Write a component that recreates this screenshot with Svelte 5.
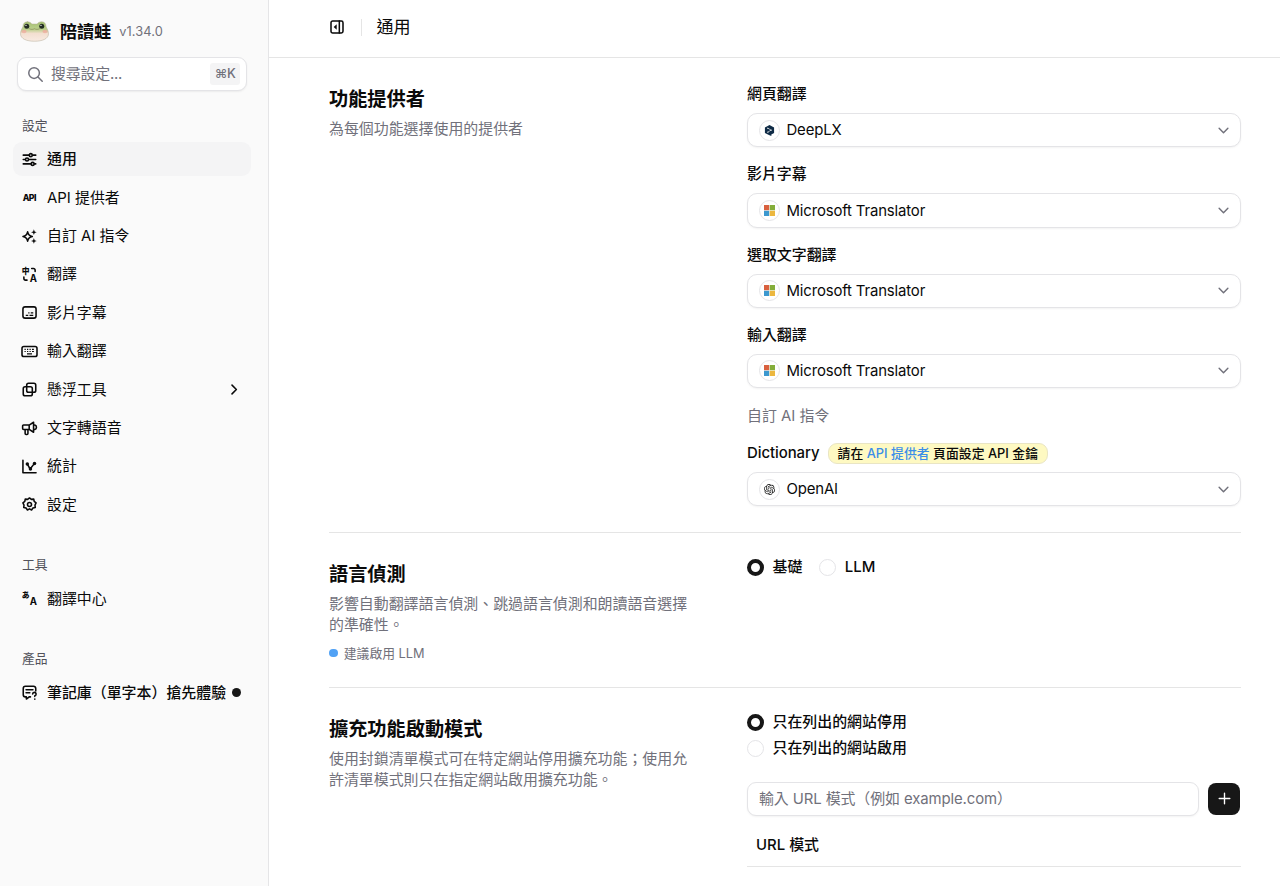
<script lang="ts">
  interface NavItem {
    label: string;
    icon: string;
    expandable?: boolean;
    badge?: boolean;
  }

  interface NavGroup {
    title: string;
    items: NavItem[];
  }

  const groups: NavGroup[] = [
    {
      title: "設定",
      items: [
        { label: "通用", icon: "sliders" },
        { label: "API 提供者", icon: "api" },
        { label: "自訂 AI 指令", icon: "sparkles" },
        { label: "翻譯", icon: "translate" },
        { label: "影片字幕", icon: "subtitles" },
        { label: "輸入翻譯", icon: "keyboard" },
        { label: "懸浮工具", icon: "float", expandable: true },
        { label: "文字轉語音", icon: "speech" },
        { label: "統計", icon: "chart" },
        { label: "設定", icon: "gear" },
      ],
    },
    { title: "工具", items: [{ label: "翻譯中心", icon: "hub" }] },
    { title: "產品", items: [{ label: "筆記庫（單字本）搶先體驗", icon: "notes", badge: true }] },
  ];

  const features = [
    { label: "網頁翻譯", provider: "DeepLX" },
    { label: "影片字幕", provider: "Microsoft Translator" },
    { label: "選取文字翻譯", provider: "Microsoft Translator" },
    { label: "輸入翻譯", provider: "Microsoft Translator" },
  ];

  let active = $state("sliders");
  let detection = $state("basic");
  let siteMode = $state("blacklist");
  let pattern = $state("");
</script>

{#snippet navIcon(name: string)}
  <svg class="nav-icon" viewBox="0 0 24 24">
    {#if name === "sliders"}
      <path d="M2 5h9M17 5h5M2 12h3M11 12h11M2 19h12M20 19h2" />
      <circle cx="14" cy="5" r="2.4" />
      <circle cx="8" cy="12" r="2.4" />
      <circle cx="17" cy="19" r="2.4" />
    {:else if name === "api"}
      <text x="12" y="17" font-size="14" textLength="22" text-anchor="middle">API</text>
    {:else if name === "sparkles"}
      <path d="M9 4.5c.9 5 2.5 6.6 7.5 7.5-5 .9-6.6 2.5-7.5 7.5-.9-5-2.5-6.6-7.5-7.5 5-.9 6.6-2.5 7.5-7.5z" />
      <path class="solid" d="M19 .5l1.2 3.3 3.3 1.2-3.3 1.2-1.2 3.3-1.2-3.3-3.3-1.2 3.3-1.2zM19 14.5l1.2 3.3 3.3 1.2-3.3 1.2-1.2 3.3-1.2-3.3-3.3-1.2 3.3-1.2z" />
    {:else if name === "translate"}
      <text x="6" y="11" font-size="12.5" text-anchor="middle">中</text>
      <text class="latin" x="18" y="23.5" font-size="15.5" text-anchor="middle">A</text>
      <path d="M15.5 2.5h3a2.5 2.5 0 0 1 2.5 2.5v2M3 16v2.5a2.5 2.5 0 0 0 2.5 2.5h2.500" />
    {:else if name === "subtitles"}
      <rect x="1.5" y="3" width="21" height="18" rx="3.5" />
      <path class="fine" d="M6 16.5h4M12 16.5h6M10 12.5h2M14 12.5h4" />
    {:else if name === "keyboard"}
      <rect x="0" y="4" width="24" height="16" rx="3" />
      <path class="fine" d="M4 8.5h2M8 8.5h2M12 8.5h2M16 8.5h3M4 12h2M8 12h2M12 12h2M16 12h3M8 15.8h8" />
    {:else if name === "float"}
      <rect x="7.5" y="2" width="14.5" height="14.5" rx="3" />
      <rect x="2" y="7.5" width="14.5" height="14.5" rx="3" />
    {:else if name === "speech"}
      <path d="M2.5 6.5h9l7-4.5v16l-7-4.5h-9a1.5 1.5 0 0 1-1.5-1.5v-4a1.5 1.5 0 0 1 1.5-1.5zM11.5 6.5v7M5 14v6a1.5 1.5 0 0 0 1.5 1.5h1.5a1.5 1.5 0 0 0 1.5-1.5v-6M20.5 6.5c3.500 1 3.500 6 0 7" />
    {:else if name === "chart"}
      <path d="M1.5 2v20h21M9 9l4 7 7-9" />
      <circle class="solid" cx="8.5" cy="8" r="2.8" />
      <circle class="solid" cx="13.5" cy="16" r="2.8" />
      <circle class="solid" cx="20" cy="7" r="2.8" />
    {:else if name === "gear"}
      <path d="M12 1.5l3 2.3 3.8-.4.7 3.7 3 2.4-1.7 3.4.4 3.8-3.7.9-2.2 3.1-3.3-1.7-3.3 1.7-2.2-3.1-3.7-.9.4-3.8-1.7-3.400 3-2.400.7-3.700 3.800.4z" />
      <circle cx="12" cy="12" r="3.2" />
    {:else if name === "hub"}
      <text x="6" y="11.5" font-size="12.5" text-anchor="middle">あ</text>
      <text class="latin" x="18" y="22" font-size="15.5" text-anchor="middle">A</text>
    {:else}
      <path d="M22 9.5v-4a3.5 3.5 0 0 0-3.5-3.5h-13a3.5 3.5 0 0 0-3.5 3.5v10a3.5 3.5 0 0 0 3.5 3.5h1.5v3.5l4.5-3.5h2M6.5 7.5h11M6.5 12.5h6" />
      <path d="M17 14.5a2.8 2.8 0 1 1 3.5 2.8v1.2M20.5 22.5v.3" />
    {/if}
  </svg>
{/snippet}

{#snippet select(provider: string)}
  <button class="select">
    <span class="logo">
      {#if provider === "DeepLX"}
        <svg viewBox="0 0 24 24">
          <path fill="#0f2b46" d="M12 0l10 5.7v11.6l-6 3.5V24l-4-1.5L2 17.3V5.7z" />
          <path fill="none" stroke="#fff" stroke-width="1.3" d="M8.5 7l7 4.2-7 4.3" />
          <circle cx="8.5" cy="7.2" r="1.4" fill="#fff" />
          <circle cx="15.5" cy="11.3" r="1.4" fill="#fff" />
          <circle cx="8.5" cy="15.5" r="1.4" fill="#fff" />
        </svg>
      {:else if provider === "OpenAI"}
        <svg viewBox="0 0 24 24">
          <path d="M22.2819 9.8211a5.9847 5.9847 0 0 0-.5157-4.9108 6.0462 6.0462 0 0 0-6.5098-2.9A6.0651 6.0651 0 0 0 4.9807 4.1818a5.9847 5.9847 0 0 0-3.9977 2.9 6.0462 6.0462 0 0 0 .7427 7.0966 5.98 5.98 0 0 0 .511 4.9107 6.051 6.051 0 0 0 6.5146 2.9001A5.9847 5.9847 0 0 0 13.2599 24a6.0557 6.0557 0 0 0 5.7718-4.2058 5.9894 5.9894 0 0 0 3.9977-2.9001 6.0557 6.0557 0 0 0-.7475-7.0729zm-9.022 12.6081a4.4755 4.4755 0 0 1-2.8764-1.0408l.1419-.0804 4.7783-2.7582a.7948.7948 0 0 0 .3927-.6813v-6.7369l2.02 1.1686a.071.071 0 0 1 .038.052v5.5826a4.504 4.504 0 0 1-4.4945 4.4944zm-9.6607-4.1254a4.4708 4.4708 0 0 1-.5346-3.0137l.142.0852 4.783 2.7582a.7712.7712 0 0 0 .7806 0l5.8428-3.3685v2.3324a.0804.0804 0 0 1-.0332.0615L9.74 19.9502a4.4992 4.4992 0 0 1-6.1408-1.6464zM2.3408 7.8956a4.485 4.485 0 0 1 2.3655-1.9728V11.6a.7664.7664 0 0 0 .3879.6765l5.8144 3.3543-2.0201 1.1685a.0757.0757 0 0 1-.071 0l-4.8303-2.7865A4.504 4.504 0 0 1 2.3408 7.872zm16.5963 3.8558L13.1038 8.364 15.1192 7.2a.0757.0757 0 0 1 .071 0l4.8303 2.7913a4.4944 4.4944 0 0 1-.6765 8.1042v-5.6772a.79.79 0 0 0-.407-.667zm2.0107-3.0231l-.142-.0852-4.7735-2.7818a.7759.7759 0 0 0-.7854 0L9.409 9.2297V6.8974a.0662.0662 0 0 1 .0284-.0615l4.8303-2.7866a4.4992 4.4992 0 0 1 6.6802 4.66zM8.3065 12.863l-2.02-1.1638a.0804.0804 0 0 1-.038-.0567V6.0742a4.4992 4.4992 0 0 1 7.3757-3.4537l-.142.0805L8.704 5.459a.7948.7948 0 0 0-.3927.6813zm1.0976-2.3654l2.602-1.4998 2.6069 1.4998v2.9994l-2.5974 1.4997-2.6067-1.4997Z" />
        </svg>
      {:else}
        <svg viewBox="0 0 24 24">
          <rect width="11.4" height="11.4" fill="#d9603f" />
          <rect x="12.6" width="11.4" height="11.4" fill="#84ad3a" />
          <rect y="12.6" width="11.4" height="11.4" fill="#3b98cf" />
          <rect x="12.6" y="12.6" width="11.4" height="11.4" fill="#ecb73f" />
        </svg>
      {/if}
    </span>
    <span class="provider">{provider}</span>
    <svg class="chevron" viewBox="0 0 24 24"><path d="M5 8.5l7 7 7-7" /></svg>
  </button>
{/snippet}

<div class="app">
  <aside>
    <div class="brand">
      <svg class="frog" viewBox="0 0 58 42">
        <defs>
          <linearGradient id="frog-skin" x1="0" y1="0" x2="0" y2="1">
            <stop offset="0" stop-color="#a3c070" />
            <stop offset="0.4" stop-color="#bdd08e" />
            <stop offset="0.6" stop-color="#f3dfd0" />
            <stop offset="1" stop-color="#f8ebe2" />
          </linearGradient>
        </defs>
        <path
          d="M15 1.5c4 0 7 2 8.5 4.5h11c1.5-2.5 4.5-4.5 8.5-4.5 5.5 0 9 3.5 9 9 0 2 5 8 5 15 0 10-12 15-28 15s-28-5-28-15c0-7 5-13 5-15 0-5.5 3.5-9 9-9z"
          fill="url(#frog-skin)"
          stroke="#b5ac98"
          stroke-width="1"
        />
        <ellipse cx="8" cy="21" rx="5" ry="3.5" fill="#f2a79c" opacity="0.7" stroke="none" />
        <ellipse cx="50" cy="21" rx="5" ry="3.5" fill="#f2a79c" opacity="0.7" stroke="none" />
        <circle cx="13.5" cy="10.5" r="5" fill="#232c23" stroke="none" />
        <circle cx="43.5" cy="10.5" r="5" fill="#232c23" stroke="none" />
        <circle cx="12" cy="8.8" r="1.2" fill="#fff" stroke="none" />
        <circle cx="42" cy="8.8" r="1.2" fill="#fff" stroke="none" />
        <path d="M19 15.5c3 2 7 1.5 10 0 3 1.5 7 2 10 0" fill="none" stroke="#7d7f50" stroke-width="1.2" />
      </svg>
      <span class="brand-name">陪讀蛙</span>
      <span class="version">v1.34.0</span>
    </div>

    <div class="search">
      <svg viewBox="0 0 24 24"><circle cx="10" cy="10" r="7.5" /><path d="M15.5 15.5l6 6" /></svg>
      <span>搜尋設定...</span>
      <kbd>⌘K</kbd>
    </div>

    {#each groups as group}
      <nav>
        <div class="group-title">{group.title}</div>
        {#each group.items as item}
          <button class="nav-item" class:active={active === item.icon} onclick={() => (active = item.icon)}>
            {@render navIcon(item.icon)}
            <span class:strong={item.badge || active === item.icon}>{item.label}</span>
            {#if item.badge}
              <i class="dot"></i>
            {/if}
            {#if item.expandable}
              <svg class="arrow" viewBox="0 0 24 24"><path d="M8 5l7 7-7 7" /></svg>
            {/if}
          </button>
        {/each}
      </nav>
    {/each}
  </aside>

  <main>
    <header>
      <svg class="toggle" viewBox="0 0 24 24">
        <rect x="3" y="3" width="18" height="18" rx="2.5" />
        <path d="M15.5 3v18" />
        <path class="solid" d="M11.5 8v8l-4.5-4z" />
      </svg>
      <span class="separator"></span>
      <span class="page-title">通用</span>
    </header>

    <div class="content">
      <section>
        <div class="intro">
          <h2>功能提供者</h2>
          <p>為每個功能選擇使用的提供者</p>
        </div>
        <div class="fields">
          {#each features as feature}
            <div class="field">
              <div class="label"><span>{feature.label}</span></div>
              {@render select(feature.provider)}
            </div>
          {/each}
          <div class="subheading">自訂 AI 指令</div>
          <div class="field">
            <div class="label">
              <span class="prompt-name">Dictionary</span>
              <div class="notice">請在 <a href="#api">API 提供者</a> 頁面設定 API 金鑰</div>
            </div>
            {@render select("OpenAI")}
          </div>
        </div>
      </section>

      <section>
        <div class="intro">
          <h2>語言偵測</h2>
          <p>影響自動翻譯語言偵測、跳過語言偵測和朗讀語音選擇的準確性。</p>
          <div class="hint"><i></i>建議啟用 LLM</div>
        </div>
        <div class="radios row">
          <label><input type="radio" bind:group={detection} value="basic" /><span>基礎</span></label>
          <label><input type="radio" bind:group={detection} value="llm" /><span>LLM</span></label>
        </div>
      </section>

      <section>
        <div class="intro">
          <h2>擴充功能啟動模式</h2>
          <p>使用封鎖清單模式可在特定網站停用擴充功能；使用允許清單模式則只在指定網站啟用擴充功能。</p>
        </div>
        <div>
          <div class="radios">
            <label><input type="radio" bind:group={siteMode} value="blacklist" /><span>只在列出的網站停用</span></label>
            <label><input type="radio" bind:group={siteMode} value="whitelist" /><span>只在列出的網站啟用</span></label>
          </div>
          <div class="add-row">
            <input class="pattern" bind:value={pattern} placeholder="輸入 URL 模式（例如 example.com）" />
            <button class="add" aria-label="新增">
              <svg viewBox="0 0 24 24"><path d="M12 3.5v17M3.5 12h17" /></svg>
            </button>
          </div>
          <div class="table-head">URL 模式</div>
        </div>
      </section>
    </div>
  </main>
</div>

<style>
  :global(body) {
    overflow: hidden;
  }

  .app {
    display: flex;
    height: 886px;
    overflow: hidden;
    background: #fff;
    color: #0a0a0a;
    font-family: Inter, "Noto Sans CJK TC", sans-serif;
    font-size: 14.93px;
    line-height: 21.33px;
  }

  svg {
    flex: none;
    fill: none;
    stroke: currentColor;
    stroke-width: 2.5;
    stroke-linecap: round;
    stroke-linejoin: round;
  }

  svg text {
    fill: currentColor;
    stroke: none;
    font-weight: 800;
  }

  svg .latin {
    font-weight: 700;
  }

  .solid {
    fill: currentColor;
    stroke: none;
  }

  button {
    font: inherit;
    color: inherit;
    cursor: pointer;
  }

  aside {
    box-sizing: border-box;
    width: 269px;
    flex: none;
    padding: 17px 17px 0 13px;
    border-right: 1px solid #e5e5e7;
    background: #fafafa;
  }

  .brand {
    display: flex;
    align-items: center;
    height: 28px;
    padding-left: 7px;
  }

  .frog {
    width: 29px;
    height: 21px;
  }

  .brand-name {
    margin-left: 11px;
    padding-top: 2px;
    font-size: 17.07px;
    font-weight: 700;
  }

  .version {
    margin-left: 8px;
    padding-top: 2px;
    font-size: 12.8px;
    letter-spacing: 0.1px;
    color: #71717b;
  }

  .search {
    box-sizing: border-box;
    display: flex;
    align-items: center;
    height: 34px;
    margin: 12px 4px 0;
    padding: 0 6px 0 9px;
    border: 1px solid #e4e4e7;
    border-radius: 9px;
    background: #fff;
    box-shadow: 0 1px 2px rgba(0, 0, 0, 0.06);
    color: #71717b;
  }

  .search svg {
    width: 17px;
    height: 17px;
    margin-right: 7px;
    stroke-width: 2.1;
  }

  .search span {
    padding-top: 2px;
    letter-spacing: -0.2px;
  }

  kbd {
    display: flex;
    align-items: center;
    justify-content: center;
    width: 30px;
    height: 22px;
    margin-left: auto;
    border-radius: 3px;
    background: #f4f4f5;
    font-family: Inter, "DejaVu Sans", sans-serif;
    font-size: 12.8px;
    font-weight: 500;
    letter-spacing: -0.4px;
  }

  nav {
    display: flex;
    flex-direction: column;
    gap: 4.28px;
    padding-top: 21px;
  }

  nav + nav {
    padding-top: 30px;
  }

  .group-title {
    height: 26px;
    padding-left: 9px;
    font-size: 12.8px;
    line-height: 27px;
    color: #52525b;
  }

  nav + nav .group-title {
    height: 25.5px;
    line-height: 26px;
  }

  .nav-item {
    display: flex;
    align-items: center;
    height: 34.13px;
    padding: 0 9px;
    border: none;
    border-radius: 9px;
    background: none;
    text-align: left;
    white-space: nowrap;
  }

  .nav-item span {
    padding-top: 1.2px;
  }

  .nav-item.active {
    background: #f4f4f5;
  }

  .nav-icon {
    width: 15px;
    height: 15px;
    margin-right: 10px;
    overflow: visible;
  }

  .fine {
    stroke-width: 1.8;
    stroke-linecap: butt;
  }

  .strong {
    font-weight: 500;
  }

  .dot {
    width: 9px;
    height: 9px;
    margin-left: 6px;
    border-radius: 50%;
    background: #171717;
  }

  .arrow {
    width: 15px;
    height: 15px;
    margin-left: auto;
  }

  main {
    flex: 1;
    min-width: 0;
  }

  header {
    box-sizing: border-box;
    display: flex;
    align-items: center;
    height: 58px;
    padding: 0 0 3px 60px;
    border-bottom: 1px solid #e5e5e5;
  }

  .toggle {
    width: 16px;
    height: 16px;
    stroke-width: 2.3;
  }

  .separator {
    width: 1px;
    height: 17px;
    margin: 0 15px 0 15.5px;
    background: #e5e5e5;
  }

  .page-title {
    font-size: 17.07px;
  }

  .content {
    padding: 0 39px 0 60px;
  }

  section {
    display: grid;
    grid-template-columns: 360px 494px;
    justify-content: space-between;
    padding: 25.5px 0;
    border-bottom: 1px solid #e5e5e5;
  }

  section + section {
    padding: 26px 0 25px;
  }

  section:last-child {
    border-bottom: none;
  }

  h2 {
    margin: 0 0 5px;
    font-size: 19.2px;
    font-weight: 600;
    line-height: 30px;
  }

  p {
    margin: 0;
    color: #71717b;
  }

  .hint {
    display: flex;
    align-items: center;
    margin-top: 8.3px;
    font-size: 12.8px;
    line-height: 17px;
    color: #71717b;
  }

  .hint i {
    width: 8.5px;
    height: 8.5px;
    margin-right: 6.3px;
    border-radius: 50%;
    background: #51a2f5;
  }

  .fields {
    display: flex;
    flex-direction: column;
    gap: 16.5px;
  }

  .field {
    display: flex;
    flex-direction: column;
    gap: 8.5px;
  }

  .label {
    display: flex;
    align-items: center;
    height: 21px;
    font-weight: 500;
  }

  .label span {
    padding-top: 1.5px;
  }

  .label .prompt-name {
    padding-top: 2px;
    letter-spacing: -0.05px;
  }

  .subheading {
    height: 21.5px;
    line-height: 22px;
    color: #71717b;
  }

  .notice {
    box-sizing: border-box;
    height: 21px;
    margin-left: 8.5px;
    padding: 0 8.5px;
    border: 1px solid #e9e5c4;
    border-radius: 9px;
    background: #fef9c2;
    font-size: 12.8px;
    line-height: 19px;
    letter-spacing: 0.05px;
    white-space: nowrap;
  }

  .notice a {
    color: #3b8ee8;
    text-decoration: none;
  }

  .select {
    box-sizing: border-box;
    display: flex;
    align-items: center;
    width: 100%;
    height: 34.25px;
    padding: 0 9px 0 10.5px;
    border: 1px solid #e4e4e7;
    border-radius: 10px;
    background: #fff;
    box-shadow: 0 1px 2px rgba(0, 0, 0, 0.05);
  }

  .provider {
    padding-top: 1.8px;
    letter-spacing: -0.15px;
  }

  .logo {
    box-sizing: border-box;
    display: flex;
    align-items: center;
    justify-content: center;
    width: 21px;
    height: 21px;
    margin-right: 7px;
    border: 1px solid #e4e4e7;
    border-radius: 50%;
  }

  .logo svg {
    width: 11px;
    height: 11px;
    fill: #171717;
    stroke: none;
  }

  .chevron {
    width: 15px;
    height: 15px;
    margin-left: auto;
    color: #71717b;
    stroke-width: 2.3;
  }

  .radios {
    display: flex;
    flex-direction: column;
    gap: 8.8px;
  }

  .radios.row {
    flex-direction: row;
    align-items: flex-start;
    gap: 17px;
  }

  label {
    display: flex;
    align-items: center;
    height: 17px;
    font-weight: 500;
  }

  label span {
    padding-top: 1px;
  }

  input[type="radio"] {
    appearance: none;
    box-sizing: border-box;
    width: 17px;
    height: 17px;
    margin: 0 8.5px 0 0;
    border: 1px solid #e4e4e7;
    border-radius: 50%;
  }

  input[type="radio"]:checked {
    border: 4.5px solid #171717;
  }

  .add-row {
    display: flex;
    align-items: center;
    gap: 9.5px;
    margin-top: 25.4px;
    padding-right: 1px;
  }

  .pattern {
    box-sizing: border-box;
    flex: 1;
    min-width: 0;
    height: 34px;
    padding: 1px 11px 0;
    border: 1px solid #e4e4e7;
    border-radius: 9px;
    box-shadow: 0 1px 2px rgba(0, 0, 0, 0.05);
    font: inherit;
    letter-spacing: -0.1px;
  }

  .pattern::placeholder {
    color: #71717b;
  }

  .add {
    display: flex;
    align-items: center;
    justify-content: center;
    width: 32px;
    height: 32px;
    padding: 0;
    border: none;
    border-radius: 8px;
    background: #171717;
    color: #fff;
  }

  .add svg {
    width: 15px;
    height: 15px;
    stroke-width: 2.2;
  }

  .table-head {
    height: 42px;
    margin-top: 8.5px;
    padding-left: 9px;
    border-bottom: 1px solid #e5e5e5;
    font-weight: 500;
    line-height: 42px;
  }
</style>
